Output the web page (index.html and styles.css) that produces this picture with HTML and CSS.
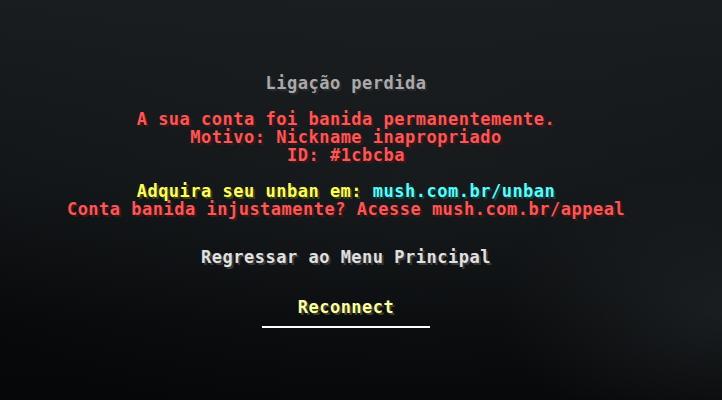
FILE: index.html
```html
<!DOCTYPE html>
<html lang="pt">
<head>
<meta charset="utf-8">
<title>Ligação perdida</title>
<link rel="stylesheet" href="styles.css">
</head>
<body>
<main class="screen">
  <section class="message">
    <p class="line gray">Ligação perdida</p>
    <p class="line blank">&nbsp;</p>
    <p class="line red">A sua conta foi banida permanentemente.</p>
    <p class="line red">Motivo: Nickname inapropriado</p>
    <p class="line red">ID: #1cbcba</p>
    <p class="line blank">&nbsp;</p>
    <p class="line"><span class="yellow">Adquira seu unban em: </span><span class="aqua">mush.com.br/unban</span></p>
    <p class="line red">Conta banida injustamente? Acesse mush.com.br/appeal</p>
  </section>
  <button class="btn white">Regressar ao Menu Principal</button>
  <button class="btn hover">Reconnect</button>
</main>
</body>
</html>
```

FILE: styles.css
```css
html, body {
  margin: 0;
  padding: 0;
  width: 722px;
  height: 400px;
  overflow: hidden;
}
body {
  background-color: #0b0e10;
  background-image:
    radial-gradient(ellipse 220px 140px at 720px 310px, rgba(40,44,46,0.55), rgba(40,44,46,0) 100%),
    radial-gradient(ellipse 520px 260px at 420px 180px, rgba(30,34,36,0.45), rgba(30,34,36,0) 100%),
    linear-gradient(180deg, #1a1d1f 0%, #121517 45%, #07090b 80%, #050709 100%);
  font-family: "DejaVu Sans Mono", "Liberation Mono", monospace;
  font-weight: bold;
  font-size: 17px;
  letter-spacing: 0.5px;
}
.screen {
  display: flex;
  flex-direction: column;
  align-items: center;
  padding-top: 74px;
  padding-right: 30px;
}
.message {
  display: flex;
  flex-direction: column;
  align-items: center;
}
.line {
  margin: 0;
  height: 18px;
  line-height: 18px;
  white-space: pre;
}
.gray { color: #aaaaaa; text-shadow: 2px 2px 0 #2a2a2a; }
.red { color: #ff5555; text-shadow: 2px 2px 0 #3f1515; }
.yellow { color: #ffff55; text-shadow: 2px 2px 0 #3f3f15; }
.aqua { color: #55ffff; text-shadow: 2px 2px 0 #153f3f; }
.btn {
  margin: 0;
  padding: 0;
  border: 0;
  background: none;
  font: inherit;
  letter-spacing: inherit;
  height: 18px;
  line-height: 18px;
  white-space: pre;
}
.white {
  margin-top: 30px;
  color: #e0e0e0;
  text-shadow: 2px 2px 0 #383838;
}
.hover {
  margin-top: 32px;
  color: #ffffa0;
  text-shadow: 2px 2px 0 #3f3f28;
  position: relative;
}
.hover::after {
  content: "";
  position: absolute;
  left: 50%;
  top: 28px;
  width: 168px;
  height: 2px;
  margin-left: -84px;
  background: #ffffff;
}
```
